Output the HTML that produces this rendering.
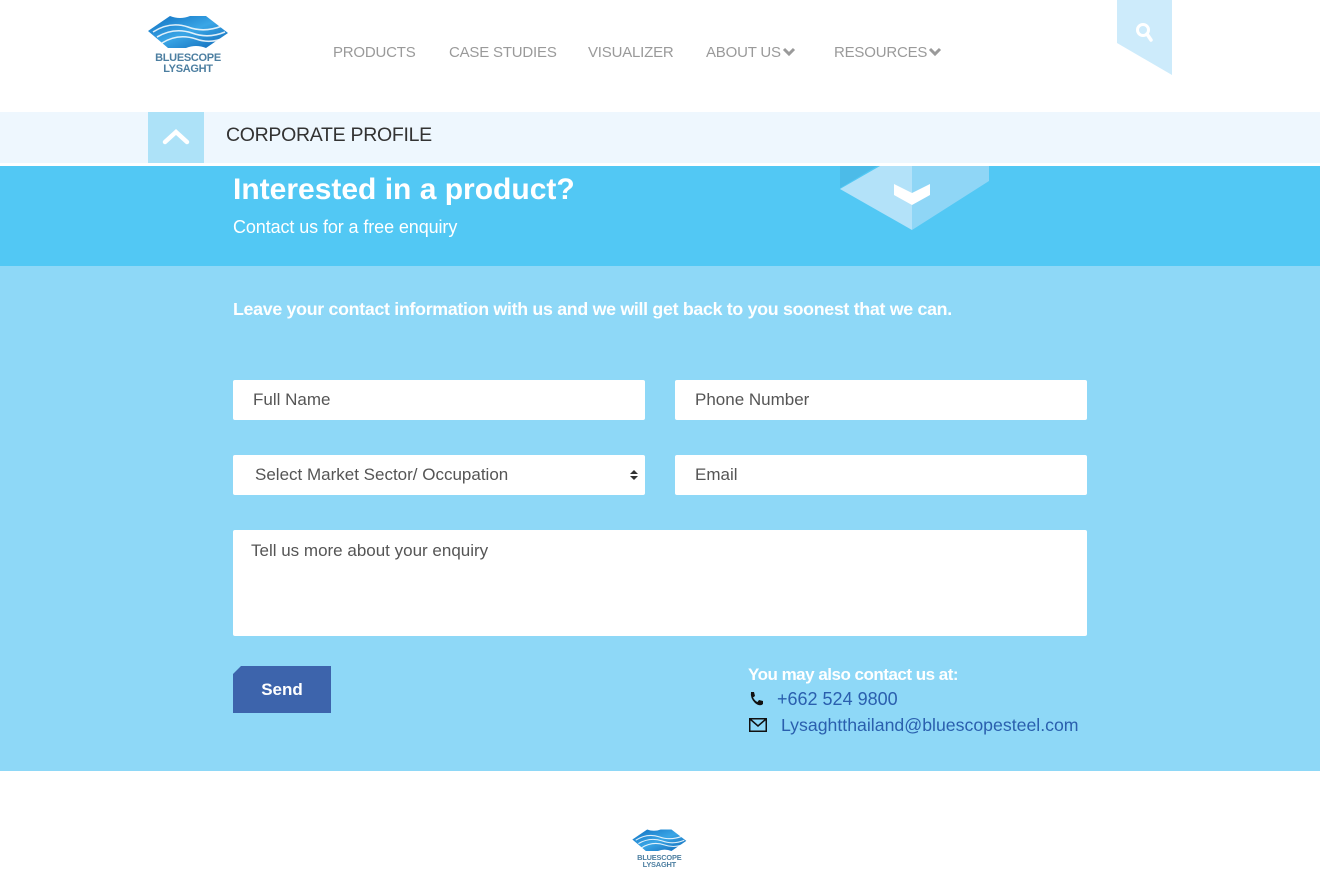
<!DOCTYPE html>
<html><head><meta charset="utf-8"><style>
*{margin:0;padding:0;box-sizing:border-box}
body{width:1320px;height:873px;overflow:hidden;background:#fff;font-family:"Liberation Sans",sans-serif;position:relative}
.abs{position:absolute}
.nav{top:44px;font-size:15px;color:#9a9a9a;letter-spacing:-0.2px}
.field{position:absolute;background:#fff;border-radius:2px;color:#555;font-size:17px;padding-left:20px;display:flex;align-items:center}
</style></head><body>
<svg class="abs" style="left:146px;top:14px" width="86" height="62" viewBox="146 14 86 62">
<defs><linearGradient id="g" x1="0" y1="0" x2="1" y2="1"><stop offset="0" stop-color="#0f6fc0"/><stop offset=".5" stop-color="#3aa6e6"/><stop offset="1" stop-color="#0d66b6"/></linearGradient></defs>
<path d="M148 31 L170 16 Q180 20 190 16 L206 16 L228 33 L206 48 Q196 44 186 48 L168 48 Z" fill="url(#g)"/>
<path d="M153 32 Q170 21 188 27 Q204 33 222 26 M157 37 Q174 27 192 33 Q208 39 225 32 M162 43 Q178 33 196 39 Q210 44 224 38" stroke="#fff" stroke-width="1.6" fill="none" opacity=".85"/>
<text x="188" y="61" text-anchor="middle" font-family="Liberation Sans" font-weight="bold" font-size="11" fill="#4d7fa1" letter-spacing="-0.3">BLUESCOPE</text>
<text x="188" y="72" text-anchor="middle" font-family="Liberation Sans" font-weight="bold" font-size="11" fill="#4d7fa1" letter-spacing="-0.3">LYSAGHT</text>
</svg>
<div class="abs nav" style="left:333px">PRODUCTS</div>
<div class="abs nav" style="left:449px">CASE STUDIES</div>
<div class="abs nav" style="left:588px">VISUALIZER</div>
<div class="abs nav" style="left:706px">ABOUT US<svg width="14" height="10" viewBox="0 0 14 10" style="margin-left:1px"><path d="M2 2 L7 7 L12 2" stroke="#9a9a9a" stroke-width="3" fill="none"/></svg></div>
<div class="abs nav" style="left:834px">RESOURCES<svg width="14" height="10" viewBox="0 0 14 10" style="margin-left:1px"><path d="M2 2 L7 7 L12 2" stroke="#9a9a9a" stroke-width="3" fill="none"/></svg></div>
<svg class="abs" style="left:1117px;top:0" width="55" height="76" viewBox="0 0 55 76"><path d="M0 0 H55 V75 L0 43 Z" fill="#cdebfb"/><circle cx="26" cy="30" r="5.5" stroke="#fff" stroke-width="3" fill="none"/><path d="M30 34 L34 40" stroke="#fff" stroke-width="3.5" stroke-linecap="round"/></svg>
<div class="abs" style="left:0;top:112px;width:1320px;height:51px;background:#eef7fe"></div>
<div class="abs" style="left:148px;top:112px;width:56px;height:51px;background:#ade2f8"></div>
<svg class="abs" style="left:148px;top:112px" width="56" height="51"><path d="M17 30 L28 20 L39 30" stroke="#fff" stroke-width="4.5" fill="none" stroke-linecap="round"/></svg>
<div class="abs" style="left:226px;top:124px;font-size:19.5px;color:#333;letter-spacing:-0.3px">CORPORATE PROFILE</div>
<div class="abs" style="left:0;top:166px;width:1320px;height:100px;background:#52c8f4"></div>
<svg class="abs" style="left:838px;top:166px" width="154" height="66" viewBox="838 166 154 66"><path d="M840 189 L880 166 H912 V230 Z" fill="#b3e2f9"/><path d="M912 166 H989 V181 L912 230 Z" fill="#8fd6f6"/><path d="M840 166 H877 L840 188 Z" fill="#4cbbe8"/><path d="M894 184 L912 193 L930 184 V195 L912 205 L894 195 Z" fill="#fff"/></svg>
<div class="abs" style="left:233px;top:173px;font-size:30px;font-weight:bold;color:#fff;letter-spacing:0">Interested in a product?</div>
<div class="abs" style="left:233px;top:217px;font-size:18px;color:#fff;letter-spacing:-0.1px">Contact us for a free enquiry</div>
<div class="abs" style="left:0;top:266px;width:1320px;height:505px;background:#8ed8f7"></div>
<div class="abs" style="left:233px;top:299px;font-size:17.8px;font-weight:bold;color:#fff;letter-spacing:-0.3px">Leave your contact information with us and we will get back to you soonest that we can.</div>
<div class="field" style="left:233px;top:380px;width:412px;height:40px">Full Name</div>
<div class="field" style="left:675px;top:380px;width:412px;height:40px">Phone Number</div>
<div class="field" style="left:233px;top:455px;width:412px;height:40px;padding-left:22px">Select Market Sector/ Occupation<svg style="position:absolute;right:7px;top:14px" width="8" height="12"><path d="M0 5 L4 1 L8 5Z M0 7 L4 11 L8 7Z" fill="#333"/></svg></div>
<div class="field" style="left:675px;top:455px;width:412px;height:40px">Email</div>
<div class="field" style="left:233px;top:530px;width:854px;height:106px;align-items:flex-start;padding-top:11px;padding-left:18px">Tell us more about your enquiry</div>
<svg class="abs" style="left:233px;top:666px" width="98" height="47"><path d="M8 0 H98 V47 H0 V8 Z" fill="#3d64ac"/><text x="49" y="29" text-anchor="middle" font-family="Liberation Sans" font-weight="bold" font-size="17" fill="#fff">Send</text></svg>
<div class="abs" style="left:748px;top:665px;font-size:17px;font-weight:bold;color:#fff;letter-spacing:-0.5px">You may also contact us at:</div>
<svg class="abs" style="left:748px;top:691px" width="16" height="16" viewBox="0 0 16 16"><path d="M3 1 L6 1 L7 5 L5 6.5 Q7 10 9.5 11 L11 9 L15 10 L15 13 Q12 16 7 12 Q2 7 3 1Z" fill="#111"/></svg>
<div class="abs" style="left:777px;top:689px;font-size:18px;color:#2a5fae">+662 524 9800</div>
<svg class="abs" style="left:749px;top:718px" width="18" height="14"><rect x="0.75" y="0.75" width="16.5" height="12.5" fill="none" stroke="#111" stroke-width="1.5"/><path d="M1 1 L9 8 L17 1" stroke="#111" stroke-width="1.5" fill="none"/></svg>
<div class="abs" style="left:781px;top:715px;font-size:17.7px;color:#2a5fae">Lysaghtthailand@bluescopesteel.com</div>
<svg class="abs" style="left:631px;top:828px" width="58" height="42" viewBox="146 14 86 62">
<path d="M148 31 L170 16 Q180 20 190 16 L206 16 L228 33 L206 48 Q196 44 186 48 L168 48 Z" fill="url(#g)"/>
<path d="M153 32 Q170 21 188 27 Q204 33 222 26 M157 37 Q174 27 192 33 Q208 39 225 32 M162 43 Q178 33 196 39 Q210 44 224 38" stroke="#fff" stroke-width="1.6" fill="none" opacity=".85"/>
<text x="188" y="61" text-anchor="middle" font-family="Liberation Sans" font-weight="bold" font-size="11" fill="#4d7fa1" letter-spacing="-0.3">BLUESCOPE</text>
<text x="188" y="72" text-anchor="middle" font-family="Liberation Sans" font-weight="bold" font-size="11" fill="#4d7fa1" letter-spacing="-0.3">LYSAGHT</text>
</svg>
</body></html>
